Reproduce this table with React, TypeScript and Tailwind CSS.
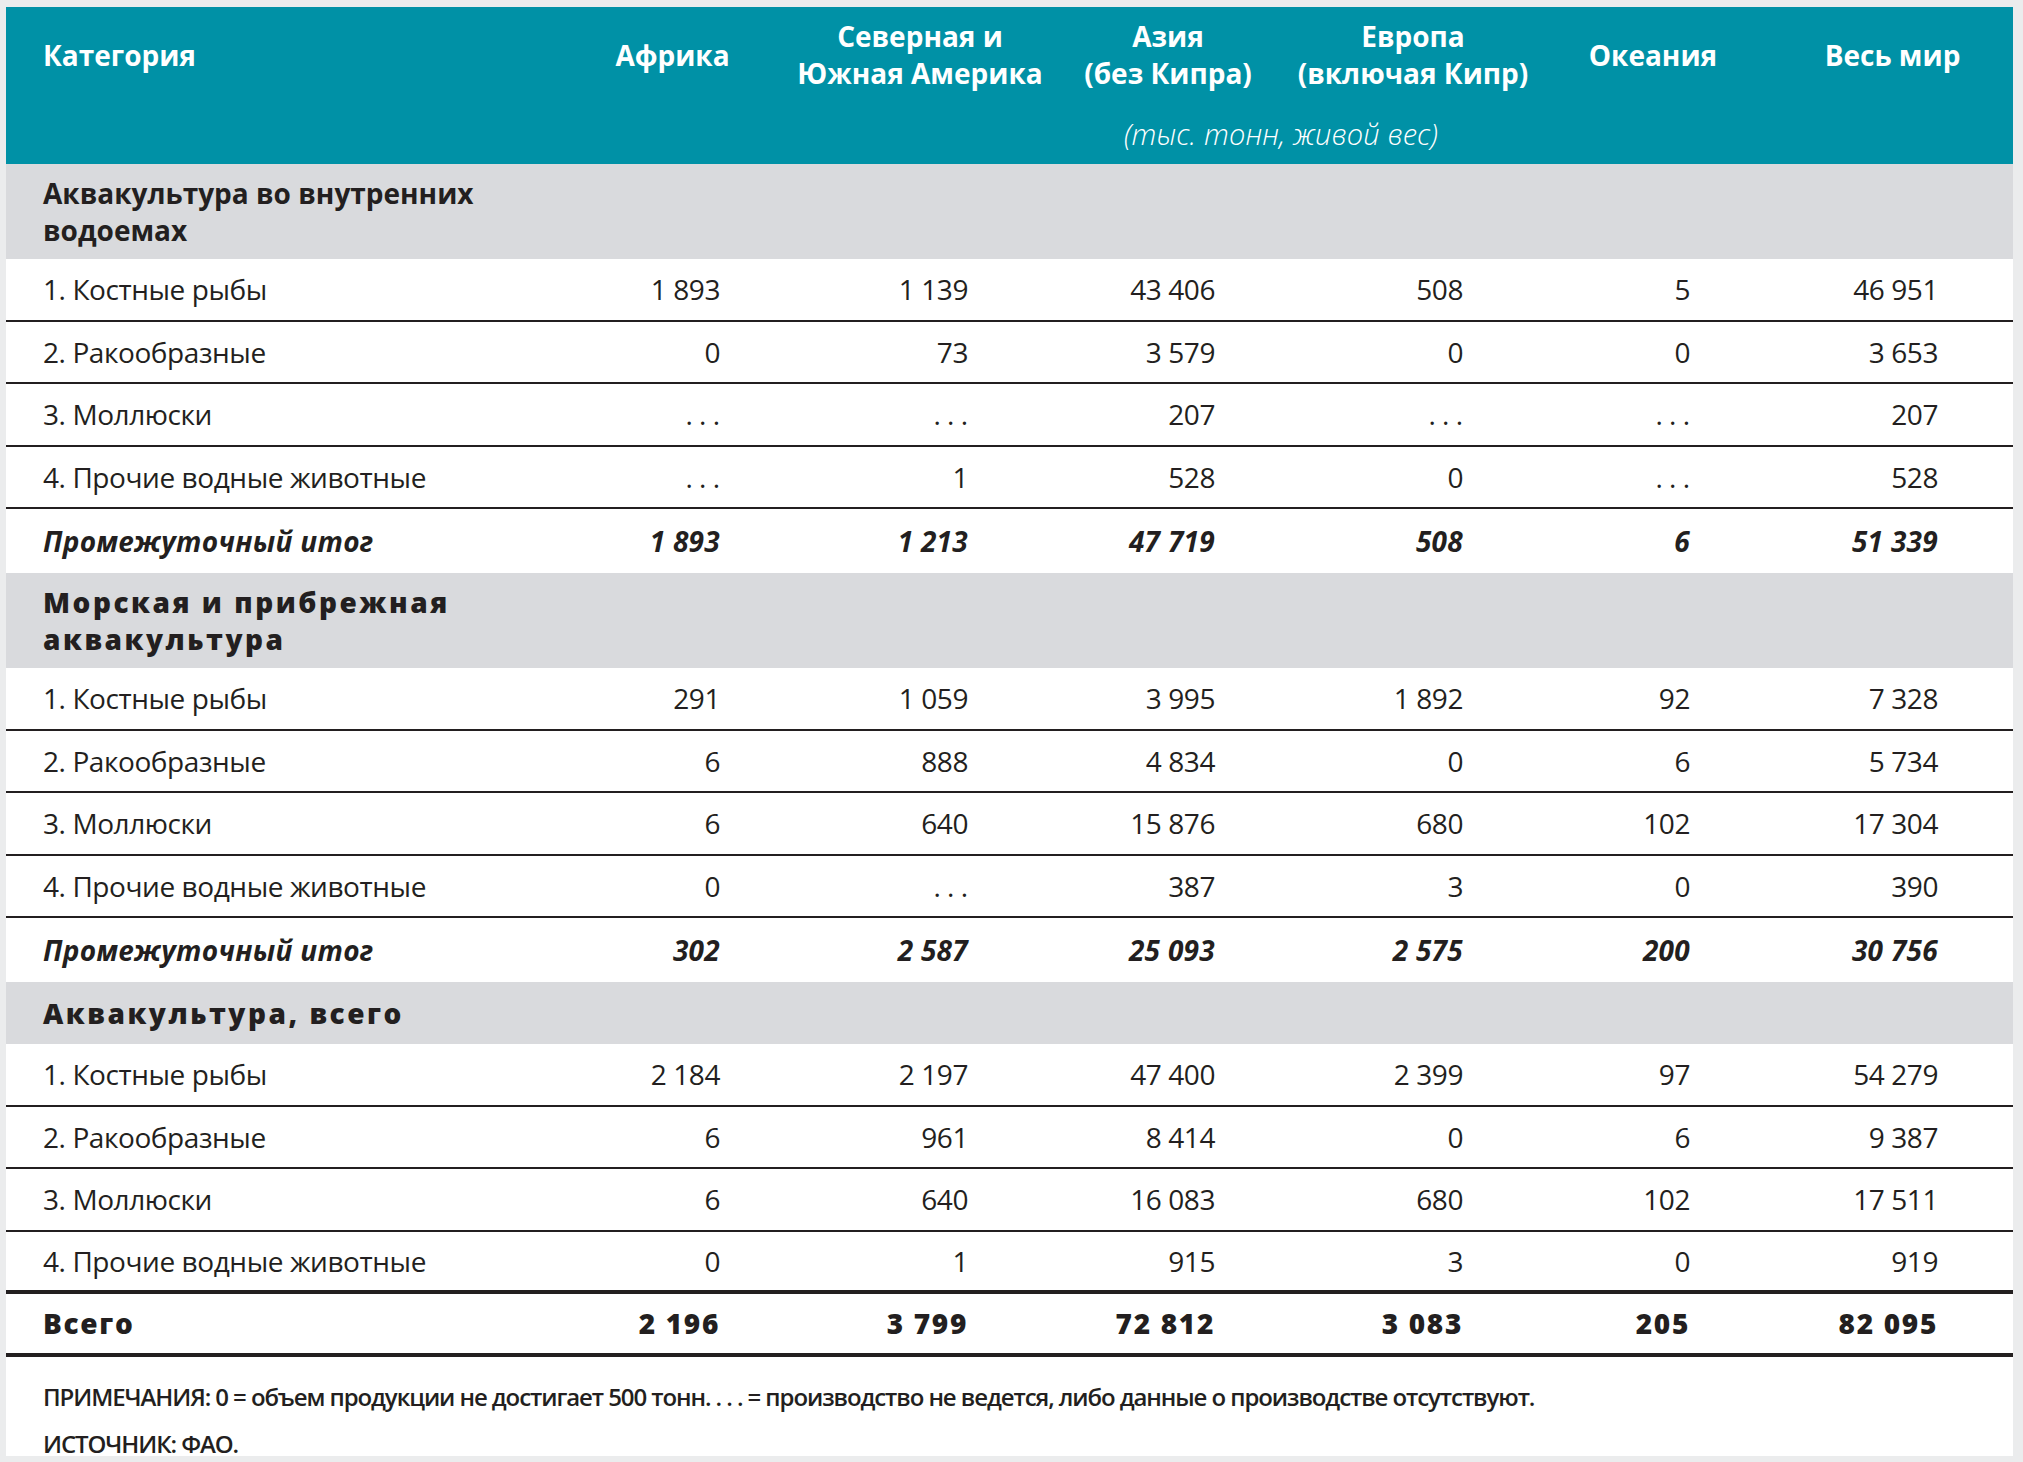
import * as React from "react"

const GRID = "grid grid-cols-[543px_247px_248px_248px_242px_238px_241px]"
const PR = ["pr-[76px]", "pr-[76px]", "pr-[77px]", "pr-[71px]", "pr-[82px]", "pr-[75px]"]

const HEAD = [
  ["Африка"],
  ["Северная и", "Южная Америка"],
  ["Азия", "(без Кипра)"],
  ["Европа", "(включая Кипр)"],
  ["Океания"],
  ["Весь мир"],
]

type Block = {
  title: string[];
  wide?: boolean;
  rows: [string, string[]][];
  subtotal?: string[];
}

const BLOCKS: Block[] = [
  {
    title: ["Аквакультура во внутренних", "водоемах"],
    rows: [
      ["1. Костные рыбы", ["1 893", "1 139", "43 406", "508", "5", "46 951"]],
      ["2. Ракообразные", ["0", "73", "3 579", "0", "0", "3 653"]],
      ["3. Моллюски", ["…", "…", "207", "…", "…", "207"]],
      ["4. Прочие водные животные", ["…", "1", "528", "0", "…", "528"]],
    ],
    subtotal: ["1 893", "1 213", "47 719", "508", "6", "51 339"],
  },
  {
    title: ["Морская и прибрежная", "аквакультура"],
    wide: true,
    rows: [
      ["1. Костные рыбы", ["291", "1 059", "3 995", "1 892", "92", "7 328"]],
      ["2. Ракообразные", ["6", "888", "4 834", "0", "6", "5 734"]],
      ["3. Моллюски", ["6", "640", "15 876", "680", "102", "17 304"]],
      ["4. Прочие водные животные", ["0", "…", "387", "3", "0", "390"]],
    ],
    subtotal: ["302", "2 587", "25 093", "2 575", "200", "30 756"],
  },
  {
    title: ["Аквакультура, всего"],
    wide: true,
    rows: [
      ["1. Костные рыбы", ["2 184", "2 197", "47 400", "2 399", "97", "54 279"]],
      ["2. Ракообразные", ["6", "961", "8 414", "0", "6", "9 387"]],
      ["3. Моллюски", ["6", "640", "16 083", "680", "102", "17 511"]],
      ["4. Прочие водные животные", ["0", "1", "915", "3", "0", "919"]],
    ],
  },
]

const TOTAL = ["2 196", "3 799", "72 812", "3 083", "205", "82 095"]

// "…" in the source is set as loosely spaced dots
function Cell({ v }: { v: string }) {
  if (v === "…") return <span className="mr-[-0.22em] tracking-[0.22em]">...</span>
  return <>{v}</>
}

function Row({ label, values, className, cellClass }: { label: string; values: string[]; className?: string; cellClass?: string }) {
  return (
    <div className={`${GRID} h-[62.5px] items-center ${className ?? ""}`}>
      <div className={`pl-[37px] ${cellClass ?? ""}`}>{label}</div>
      {values.map((v, i) => (
        <div key={i} className={`text-right ${PR[i]} ${cellClass ?? ""}`}>
          <Cell v={v} />
        </div>
      ))}
    </div>
  )
}

export default function App() {
  return (
    <div className="min-h-screen bg-[#ebeced] pt-[7px] pl-[6px] pr-[10px] font-['Open_Sans',sans-serif] text-[#231f20]">
      <div className="w-[2007px]">
        {/* header */}
        <div className="h-[157px] bg-[#0091a6] text-white">
          <div className={`${GRID} h-[96px] items-center text-[28px] font-bold leading-[37px]`}>
            <div className="pl-[37px]">Категория</div>
            {HEAD.map((lines, i) => (
              <div key={i} className="text-center">
                {lines.map((l) => (
                  <div key={l}>{l}</div>
                ))}
              </div>
            ))}
          </div>
          <div className={`${GRID} h-[61px] items-center`}>
            <div className="col-start-4 col-span-2 pr-[16px] text-center text-[29px] font-light italic tracking-[0.005em]">
              (тыс. тонн, живой вес)
            </div>
          </div>
        </div>

        {BLOCKS.map((b, bi) => (
          <div key={bi}>
            <div
              className={`flex flex-col justify-center bg-[#d9dadd] pl-[37px] text-[28px] leading-[37px] ${
                b.title.length > 1 ? "h-[95px]" : "h-[62px]"
              } ${b.wide ? "font-extrabold tracking-[0.09em]" : "font-bold"}`}
            >
              {b.title.map((t) => (
                <div key={t}>{t}</div>
              ))}
            </div>
            <div className="bg-white text-[28px] tracking-[-0.015em]">
              {b.rows.map(([label, vals], ri) => (
                <Row
                  key={label}
                  label={label}
                  values={vals}
                  className={
                    bi === 2 && ri === 3 ? "border-b-4 border-[#231f20]" : "border-b-2 border-[#231f20]"
                  }
                />
              ))}
              {b.subtotal && (
                <Row
                  label="Промежуточный итог"
                  values={b.subtotal}
                  className="h-[64px] tracking-[0.01em]"
                  cellClass="font-bold italic"
                />
              )}
            </div>
          </div>
        ))}

        <div className="bg-white text-[28px]">
          <Row
            label="Всего"
            values={TOTAL}
            className="border-b-4 border-[#231f20]"
            cellClass="font-extrabold tracking-[0.06em]"
          />
        </div>

        {/* notes */}
        <div className="h-[99px] bg-white pl-[37px] pt-[16px] text-[24px] font-semibold leading-[47px] tracking-[-0.045em]">
          <div>
            ПРИМЕЧАНИЯ: 0 = объем продукции не достигает 500 тонн. . . . = производство не ведется, либо данные о производстве отсутствуют.
          </div>
          <div>ИСТОЧНИК: ФАО.</div>
        </div>
      </div>
    </div>
  )
}
